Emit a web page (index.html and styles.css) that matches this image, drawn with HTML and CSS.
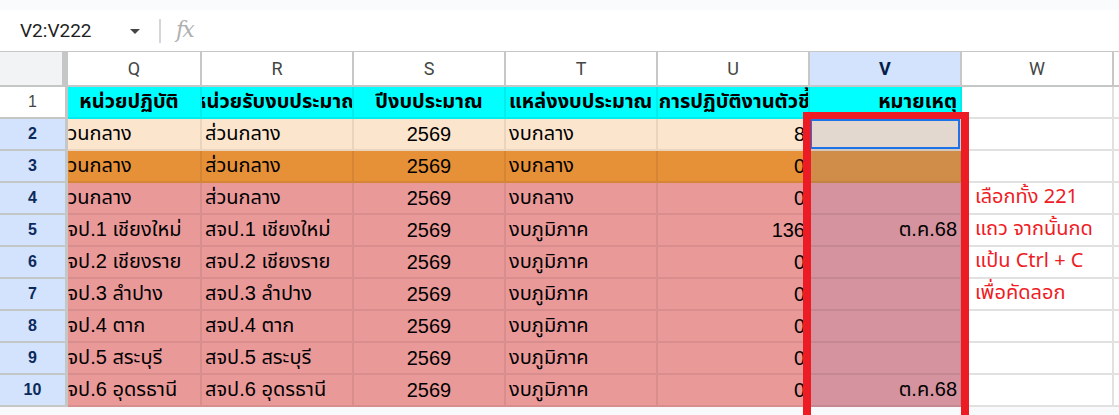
FILE: index.html
```html
<!DOCTYPE html>
<html lang="th">
<head>
<meta charset="utf-8">
<title>Sheet</title>
<link rel="stylesheet" href="styles.css">
</head>
<body>
<div class="app">
  <div class="topstrip"></div>
  <div class="fbar">
    <div class="namebox">V2:V222</div>
    <svg class="caret" width="12" height="7" viewBox="0 0 12 7"><path d="M1 1h10L6 6z" fill="#444746"/></svg>
    <div class="sep"></div>
    <div class="fx">fx</div>
  </div>
  <div class="sheet">
    <div class="grid">
      <!-- column header row -->
      <div class="c corner"></div>
      <div class="c ch">Q</div>
      <div class="c ch">R</div>
      <div class="c ch">S</div>
      <div class="c ch">T</div>
      <div class="c ch">U</div>
      <div class="c ch sel">V</div>
      <div class="c ch">W</div>
      <div class="c ch last"></div>

      <!-- row 1 -->
      <div class="c rh">1</div>
      <div class="c cy b qv"><span class="qin center">หน่วยปฏิบัติ</span></div>
      <div class="c cy b center">หน่วยรับงบประมาณ</div>
      <div class="c cy b center">ปีงบประมาณ</div>
      <div class="c cy b">แหล่งงบประมาณ</div>
      <div class="c cy b center">ผลการปฏิบัติงานตัวชี้วัด</div>
      <div class="c cy b right">หมายเหตุ</div>
      <div class="c w"></div>
      <div class="c w last"></div>

      <!-- row 2 -->
      <div class="c rh s">2</div>
      <div class="c pe qv"><span class="qin">ส่วนกลาง</span></div>
      <div class="c pe">ส่วนกลาง</div>
      <div class="c pe center">2569</div>
      <div class="c pe">งบกลาง</div>
      <div class="c pe right">8</div>
      <div class="c pe vt active"></div>
      <div class="c w"></div>
      <div class="c w last"></div>

      <!-- row 3 -->
      <div class="c rh s">3</div>
      <div class="c or qv"><span class="qin">ส่วนกลาง</span></div>
      <div class="c or">ส่วนกลาง</div>
      <div class="c or center">2569</div>
      <div class="c or">งบกลาง</div>
      <div class="c or right">0</div>
      <div class="c or vt"></div>
      <div class="c w"></div>
      <div class="c w last"></div>

      <!-- row 4 -->
      <div class="c rh s">4</div>
      <div class="c pk qv"><span class="qin">ส่วนกลาง</span></div>
      <div class="c pk">ส่วนกลาง</div>
      <div class="c pk center">2569</div>
      <div class="c pk">งบกลาง</div>
      <div class="c pk right">0</div>
      <div class="c pk vt"></div>
      <div class="c w"></div>
      <div class="c w last"></div>

      <!-- row 5 -->
      <div class="c rh s">5</div>
      <div class="c pk qv"><span class="qin">สจป.1 เชียงใหม่</span></div>
      <div class="c pk">สจป.1 เชียงใหม่</div>
      <div class="c pk center">2569</div>
      <div class="c pk">งบภูมิภาค</div>
      <div class="c pk right">136</div>
      <div class="c pk vt right">ต.ค.68</div>
      <div class="c w"></div>
      <div class="c w last"></div>

      <!-- row 6 -->
      <div class="c rh s">6</div>
      <div class="c pk qv"><span class="qin">สจป.2 เชียงราย</span></div>
      <div class="c pk">สจป.2 เชียงราย</div>
      <div class="c pk center">2569</div>
      <div class="c pk">งบภูมิภาค</div>
      <div class="c pk right">0</div>
      <div class="c pk vt"></div>
      <div class="c w"></div>
      <div class="c w last"></div>

      <!-- row 7 -->
      <div class="c rh s">7</div>
      <div class="c pk qv"><span class="qin">สจป.3 ลำปาง</span></div>
      <div class="c pk">สจป.3 ลำปาง</div>
      <div class="c pk center">2569</div>
      <div class="c pk">งบภูมิภาค</div>
      <div class="c pk right">0</div>
      <div class="c pk vt"></div>
      <div class="c w"></div>
      <div class="c w last"></div>

      <!-- row 8 -->
      <div class="c rh s">8</div>
      <div class="c pk qv"><span class="qin">สจป.4 ตาก</span></div>
      <div class="c pk">สจป.4 ตาก</div>
      <div class="c pk center">2569</div>
      <div class="c pk">งบภูมิภาค</div>
      <div class="c pk right">0</div>
      <div class="c pk vt"></div>
      <div class="c w"></div>
      <div class="c w last"></div>

      <!-- row 9 -->
      <div class="c rh s">9</div>
      <div class="c pk qv"><span class="qin">สจป.5 สระบุรี</span></div>
      <div class="c pk">สจป.5 สระบุรี</div>
      <div class="c pk center">2569</div>
      <div class="c pk">งบภูมิภาค</div>
      <div class="c pk right">0</div>
      <div class="c pk vt"></div>
      <div class="c w"></div>
      <div class="c w last"></div>

      <!-- row 10 -->
      <div class="c rh s">10</div>
      <div class="c pk qv"><span class="qin">สจป.6 อุดรธานี</span></div>
      <div class="c pk">สจป.6 อุดรธานี</div>
      <div class="c pk center">2569</div>
      <div class="c pk">งบภูมิภาค</div>
      <div class="c pk right">0</div>
      <div class="c pk vt right">ต.ค.68</div>
      <div class="c w"></div>
      <div class="c w last"></div>
    </div>
    <div class="bottom"></div>

    <div class="frame"></div>
    <div class="note">
      <div>เลือกทั้ง 221</div>
      <div>แถว จากนั้นกด</div>
      <div>แป้น Ctrl + C</div>
      <div>เพื่อคัดลอก</div>
    </div>
  </div>
</div>
</body>
</html>
```

FILE: styles.css
```css
* { box-sizing: border-box; }
html, body { margin: 0; padding: 0; background: #ffffff; }
body {
  width: 1119px;
  height: 415px;
  overflow: hidden;
  font-family: "Liberation Sans", "Noto Sans Thai", Tahoma, sans-serif;
}

.app { width: 1119px; height: 415px; overflow: hidden; }

.topstrip { height: 10px; background: #f9fbfd; }

.fbar {
  height: 41px;
  display: flex;
  align-items: center;
  background: #ffffff;
}
.namebox {
  font-family: Roboto, "Liberation Sans", sans-serif;
  font-size: 19px;
  color: #1f1f1f;
  margin-left: 20px;
  width: 109px;
}
.caret { margin-top: 1px; }
.sep {
  width: 2px;
  height: 24px;
  background: #d5d5d5;
  margin-left: 18px;
}
.fx {
  margin-left: 15px;
  font-family: "DejaVu Serif", "Liberation Serif", serif;
  font-style: italic;
  font-size: 22px;
  color: #b0b0b0;
  letter-spacing: -2px;
  margin-top: -2px;
}

.sheet { position: relative; }

.grid {
  display: grid;
  grid-template-columns: 68px 134px 152px 152px 152px 152px 152px 152px 1fr;
  grid-template-rows: 36px repeat(10, 32px);
}

.c {
  border-right: 2px solid rgba(0,0,0,0.07);
  border-bottom: 2px solid rgba(0,0,0,0.07);
  font-size: 20px;
  color: #000000;
  display: flex;
  align-items: center;
  padding: 0 3px;
  overflow: hidden;
  white-space: nowrap;
}
.center { justify-content: center; }
.right { justify-content: flex-end; }
.b { font-weight: bold; }

.corner {
  background: #f1f3f4;
  border-top: 1px solid #c7c7c7;
  border-right: 6px solid #c4c7c5;
  border-bottom: 2px solid #c4c7c5;
}
.ch {
  background: #ffffff;
  border-top: 1px solid #c7c7c7;
  border-right: 2px solid #c7c7c7;
  border-bottom: 2px solid #c4c7c5;
  justify-content: center;
  font-family: Roboto, "Liberation Sans", sans-serif;
  font-size: 18px;
  color: #444746;
}
.ch.sel { background: #d3e3fd; color: #041e49; font-weight: bold; }
.ch.last { border-right: none; }

.rh {
  background: #ffffff;
  border-right: 3px solid #c4c7c5;
  border-bottom: 2px solid #c4c7c5;
  justify-content: center;
  font-family: "Liberation Sans", Arial, sans-serif;
  font-size: 16px;
  color: #444746;
}
.rh.s { background: #d3e3fd; color: #0b2a5b; font-weight: bold; }

.cy { background: #00ffff; }
.pe { background: #fce5cd; }
.or { background: #e69138; }
.pk { background: #ea9999; }

.pe.vt { background: #e2d8cf; }
.or.vt { background: #d08d4a; }
.pk.vt { background: #d4939e; }

.active { box-shadow: inset 0 0 0 2px #1a73e8; }

.w { background: #ffffff; border-right: 2px solid #e1e1e1; border-bottom: 2px solid #e1e1e1; }
.last { border-right: none; }

.qv { padding: 0; }
.qin {
  display: flex;
  flex: none;
  width: 152px;
  margin-left: -15px;
  padding: 0 3px;
  white-space: nowrap;
  overflow: hidden;
}
.qin.center { justify-content: center; }

.bottom {
  height: 12px;
  background: #f8f9fa;
}

.frame {
  position: absolute;
  left: 803px;
  top: 61px;
  width: 166px;
  height: 320px;
  border: 8px solid #ed1c24;
  border-top-width: 7px;
}

.note {
  position: absolute;
  left: 975px;
  top: 130px;
  color: #ee1c25;
  font-size: 20px;
  font-family: "Noto Sans Thai", Tahoma, "DejaVu Sans", sans-serif;
}
.note div { height: 32px; line-height: 32px; white-space: nowrap; }
```
